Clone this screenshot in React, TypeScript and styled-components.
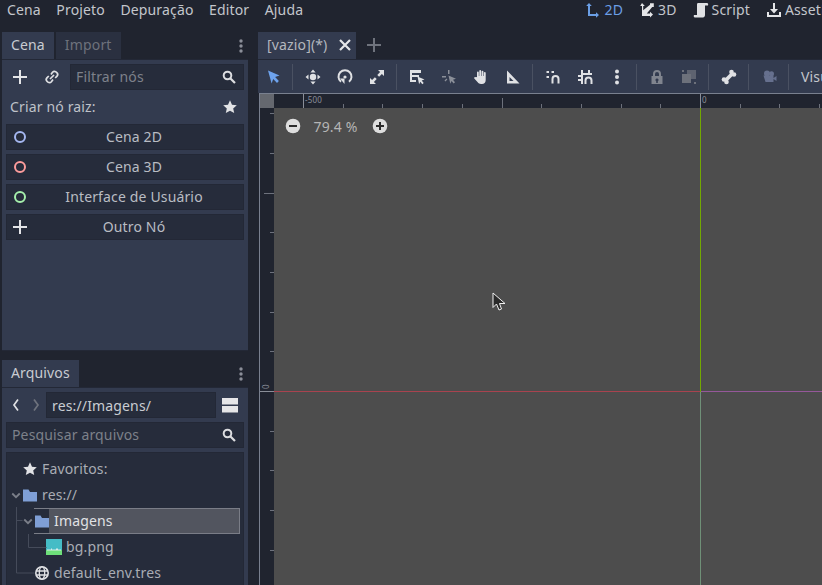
import React from 'react';
import { styled, createGlobalStyle } from 'styled-components';

const GlobalStyle = createGlobalStyle`
  html, body { margin: 0; padding: 0; background: #20242f; }
  body {
    font-family: "Noto Sans", "Liberation Sans", sans-serif;
    font-size: 14px;
    letter-spacing: 0.15px;
    color: #c9ccd2;
  }
`;

const Root = styled.div`
  width: 822px;
  height: 585px;
  overflow: hidden;
  background: #20242f;
  display: flex;
  flex-direction: column;
`;

const MenuBar = styled.div`
  height: 32px;
  flex: none;
  display: flex;
  justify-content: space-between;
  padding-left: 7px;
`;

const MenuGroup = styled.div<{ $gap: number; $overflow?: number }>`
  display: flex;
  gap: ${(p) => p.$gap}px;
  height: 20px;
  align-items: center;
  line-height: 20px;
  white-space: nowrap;
  margin-right: ${(p) => -(p.$overflow ?? 0)}px;
`;

const MenuItem = styled.span<{ $active?: boolean }>`
  display: inline-flex;
  align-items: center;
  gap: 3px;
  color: ${(p) => (p.$active ? '#6b9fe6' : '#c3c6cc')};
`;

const Main = styled.div`
  flex: 1;
  display: flex;
  min-height: 0;
`;

const LeftColumn = styled.div`
  width: 246px;
  margin-left: 2px;
  flex: none;
  display: flex;
  flex-direction: column;
`;

const TabBar = styled.div`
  height: 27px;
  flex: none;
  display: flex;
  gap: 2px;
  position: relative;
`;

const Tab = styled.div<{ $dim?: boolean }>`
  padding: 0 9px;
  line-height: 26px;
  background: ${(p) => (p.$dim ? '#2a3040' : '#333b4f')};
  color: ${(p) => (p.$dim ? '#6e727c' : '#c9ccd2')};
`;

const KebabSlot = styled.div`
  margin-left: auto;
  width: 16px;
  display: flex;
  align-items: center;
  margin-right: -1px;
`;

const ScenePanel = styled.div`
  height: 292px;
  flex: none;
  background: #333b4f;
  border-top: 1px solid #232836;
  border-bottom: 1px solid #232836;
  box-sizing: border-box;
  padding: 4px 4px 0;
  margin-bottom: 9px;
`;

const FilePanel = styled.div`
  flex: 1;
  background: #333b4f;
  border-top: 1px solid #232836;
  padding: 4px 4px 0;
  min-height: 0;
`;

const Row = styled.div<{ $mb?: number }>`
  display: flex;
  align-items: center;
  height: 26px;
  margin-bottom: ${(p) => p.$mb ?? 4}px;
`;

const IconSlot = styled.div<{ $w: number }>`
  width: ${(p) => p.$w}px;
  flex: none;
  display: flex;
  align-items: center;
  justify-content: center;
`;

const Field = styled.div`
  flex: 1;
  height: 26px;
  box-sizing: border-box;
  background: #262c3b;
  border: 1px solid #232836;
  display: flex;
  align-items: center;
  justify-content: space-between;
  padding: 0 6px 0 5px;
  color: #c9ccd2;
`;

const Placeholder = styled.span`
  color: #7d818a;
  margin-bottom: 2px;
`;

const RootLabel = styled.div`
  display: flex;
  align-items: center;
  justify-content: space-between;
  height: 33px;
  padding: 0 6px 0 4px;
  margin-bottom: 1px;
  color: #bfc2c9;
`;

const NodeButton = styled.div`
  height: 26px;
  box-sizing: border-box;
  margin-bottom: 4px;
  padding-left: 18px;
  background: #262c3b;
  border: 1px solid #232836;
  position: relative;
  line-height: 24px;
  text-align: center;
  color: #b9bcc3;
`;

const NodeIcon = styled.span`
  position: absolute;
  left: 5px;
  top: 4px;
  display: flex;
`;

const Tree = styled.div`
  background: #262c3b;
  border: 1px solid #232836;
  height: 140px;
  position: relative;
  padding-top: 3px;
  color: #a9acb4;
`;

const TreeRow = styled.div<{ $indent: number }>`
  height: 26px;
  box-sizing: border-box;
  display: flex;
  align-items: center;
  gap: 4px;
  margin-left: ${(p) => p.$indent}px;
`;

const TreeLabel = styled.span`
  margin-bottom: 2px;
`;

const ArrowSlot = styled.span`
  display: flex;
  width: 12px;
  flex: none;
  margin-right: -4px;
`;

const SelectedRow = styled.div`
  flex: 1;
  height: 26px;
  box-sizing: border-box;
  margin-right: 3px;
  display: flex;
  align-items: center;
  gap: 5px;
  background: #52555f;
  border: 1px solid #7a7d87;
  color: #e0e1e4;
`;

const SelectedIcon = styled.span`
  background: #262c3b;
  display: flex;
  align-self: stretch;
  align-items: center;
  width: 15px;
  margin-left: -1px;
`;

const TreeLines = styled.svg`
  position: absolute;
  left: 0;
  top: 0;
  pointer-events: none;
`;

const Editor = styled.div`
  flex: 1;
  margin-left: 10px;
  min-width: 0;
  display: flex;
  flex-direction: column;
`;

const EditorTabs = styled.div`
  height: 27px;
  flex: none;
  display: flex;
  align-items: stretch;
`;

const EditorTab = styled.div`
  width: 98px;
  box-sizing: border-box;
  padding: 0 3px 2px 9px;
  background: #333b4f;
  display: flex;
  align-items: center;
  justify-content: space-between;
  color: #b4b7be;
`;

const AddTab = styled.div`
  width: 36px;
  padding-bottom: 2px;
  display: flex;
  align-items: center;
  justify-content: center;
`;

const Toolbar = styled.div`
  height: 33px;
  flex: none;
  display: flex;
  align-items: center;
  background: #333b4f;
  border-top: 1px solid #232836;
  overflow: hidden;
`;

const ToolButton = styled.div<{ $first?: boolean }>`
  width: ${(p) => (p.$first ? 31 : 32)}px;
  flex: none;
  display: flex;
  justify-content: center;
`;

const ToolSep = styled.div`
  width: 1px;
  height: 26px;
  flex: none;
  background: #4a5162;
  margin: 0 4px 0 3px;
`;

const ToolText = styled.span`
  margin-left: 8px;
  color: #c3c6cc;
  white-space: nowrap;
`;

const CanvasFrame = styled.div`
  flex: 1;
  margin-left: 1px;
  border-top: 1px solid #79808f;
  border-left: 1px solid #79808f;
  display: grid;
  grid-template-columns: 14px 1fr;
  grid-template-rows: 14px 1fr;
  min-height: 0;
`;

const RulerCorner = styled.div`
  background: #65686f;
`;

const Ruler = styled.svg`
  display: block;
  background: #20242f;
`;

const Viewport = styled.div`
  background: #4d4d4d;
  position: relative;
  overflow: hidden;
`;

// origin of the canvas sits at (426, 283) inside the viewport
const AxisX = styled.div<{ $positive?: boolean }>`
  position: absolute;
  top: 283px;
  height: 1px;
  ${(p) => (p.$positive ? 'left: 427px; right: 0;' : 'left: 0; width: 426px;')}
  background: ${(p) => (p.$positive ? '#95589a' : '#a8434f')};
`;

const AxisY = styled.div<{ $positive?: boolean }>`
  position: absolute;
  left: 426px;
  width: 1px;
  ${(p) => (p.$positive ? 'top: 284px; bottom: 0;' : 'top: 0; height: 284px;')}
  background: ${(p) => (p.$positive ? '#6f9078' : '#72a800')};
`;

const ZoomControls = styled.div`
  position: absolute;
  left: 11px;
  top: 10px;
  display: flex;
  align-items: center;
  height: 16px;
  color: #b5b5b5;
`;

const ZoomValue = styled.span`
  width: 69px;
  padding-right: 2px;
  text-align: center;
`;

const CursorMark = styled.svg`
  position: absolute;
  left: 218px;
  top: 184px;
`;

const Ic = ({ children, size = 16 }: { children: React.ReactNode; size?: number }) => (
  <svg width={size} height={size} viewBox="0 0 16 16" fill="none" style={{ display: 'block', flex: 'none' }}>
    {children}
  </svg>
);

const Plus = ({ color = '#e4e5e8' }: { color?: string }) => (
  <Ic>
    <path d="M7 1h2v6h6v2H9v6H7V9H1V7h6z" fill={color} />
  </Ic>
);
const LinkIcon = () => (
  <Ic>
    <path d="M7 5.500l1.500-2.200c.9-1 2.300-1.200 3.400-.4l.9.7c1 .9 1.100 2.400.2 3.500L11.200 9M9 10.500l-1.600 2.200c-.9 1-2.300 1.200-3.400.4l-.9-.7c-1-.9-1.100-2.400-.2-3.500L4.800 7M6 10l4-4" stroke="#dfe0e3" strokeWidth="1.700" />
  </Ic>
);
const Search = () => (
  <Ic>
    <circle cx="6.500" cy="6.500" r="3.800" stroke="#dcdde0" strokeWidth="2" />
    <path d="M9.500 9.500l4.500 4.500" stroke="#dcdde0" strokeWidth="2.200" />
  </Ic>
);
const Star = () => (
  <Ic>
    <path d="M8 1.300l2 4.400 4.800.5-3.600 3.200 1 4.700L8 11.700l-4.200 2.400 1-4.700L1.200 6.200 6 5.700z" fill="#e2e3e6" />
  </Ic>
);
const Kebab = () => (
  <Ic>
    <circle cx="8" cy="3" r="1.700" fill="#8b8f99" />
    <circle cx="8" cy="8" r="1.700" fill="#8b8f99" />
    <circle cx="8" cy="13" r="1.700" fill="#8b8f99" />
  </Ic>
);
const Ring = ({ color }: { color: string }) => (
  <Ic>
    <circle cx="8" cy="8" r="5" stroke={color} strokeWidth="2" />
  </Ic>
);
const Chevron = ({ dir, color }: { dir: 'l' | 'r'; color: string }) => (
  <Ic>
    <path d={dir === 'l' ? 'M10 2.500L6 8l4 5.500' : 'M6 2.500L10 8l-4 5.500'} stroke={color} strokeWidth="1.700" />
  </Ic>
);
const SplitView = () => (
  <Ic>
    <path d="M0 1h16v6.500H0zM0 9h16v6.500H0z" fill="#e6e6e8" />
  </Ic>
);
const Folder = () => (
  <Ic>
    <path d="M1 2.500h5.500L8 5h7v9.500H1z" fill="#7f9fd6" />
  </Ic>
);
const Arrow = () => (
  <ArrowSlot>
    <Ic size={12}>
      <path d="M3 6l5 5 5-5" stroke="#7b7f89" strokeWidth="2.400" />
    </Ic>
  </ArrowSlot>
);
const ImageThumb = () => (
  <Ic>
    <path d="M0 0h16v11H0z" fill="#45bcc6" />
    <path d="M0 11h16v5H0z" fill="#6ee07a" />
    <path d="M1 10.500h4v-1h1v1h4v-1h2v1h3v1H1z" fill="#d8ece8" />
  </Ic>
);
const Globe = () => (
  <Ic>
    <circle cx="8" cy="8" r="6.200" stroke="#e0e1e4" strokeWidth="1.600" />
    <ellipse cx="8" cy="8" rx="2.700" ry="6.200" stroke="#e0e1e4" strokeWidth="1.300" />
    <path d="M2 6h12M2 10h12" stroke="#e0e1e4" strokeWidth="1.300" />
  </Ic>
);
const Close = () => (
  <Ic>
    <path d="M3 3l10 10M13 3L3 13" stroke="#e6e7ea" strokeWidth="2.200" />
  </Ic>
);

const SelectTool = () => (
  <Ic>
    <path d="M2 1.500l11.500 5-4.400 1.600 3.800 4-1.900 1.900-3.800-4-1.600 4.500z" fill="#6ea3ee" />
  </Ic>
);
const MoveTool = () => (
  <Ic>
    <path d="M8 .5l2.600 3H5.400zM8 15.500l-2.600-3h5.200zM.5 8l3-2.600v5.200zM15.500 8l-3 2.600V5.400z" fill="#e0e1e4" />
    <circle cx="8" cy="8" r="3.200" fill="#e0e1e4" />
  </Ic>
);
const RotateTool = () => (
  <Ic>
    <path d="M4 12.800A6.500 6.500 0 1 1 12 12.800" stroke="#e0e1e4" strokeWidth="2" />
    <path d="M3 9.500h4.500v5.500z" fill="#e0e1e4" />
    <circle cx="8" cy="8" r="1.600" fill="#e0e1e4" />
  </Ic>
);
const ScaleTool = () => (
  <Ic>
    <path d="M9 1h6v6l-2.100-2.100-2.800 2.800L8.300 5.900l2.800-2.800zM1 9l2.100 2.100 2.800-2.800 1.800 1.800-2.800 2.800L7 15H1z" fill="#e0e1e4" />
  </Ic>
);
const ListSelectTool = () => (
  <Ic>
    <path d="M1 1h11v3H3v2h7v2H3v3h4v2H1z" fill="#e0e1e4" />
    <path d="M8.500 7.500l7 3-2.800 1 2 2.500-1.400 1.200-2-2.500-1.200 2.500z" fill="#e0e1e4" />
  </Ic>
);
const PivotTool = () => (
  <Ic>
    <path d="M7 1h1.500v4H7zM1 7h4v1.500H1zM3.500 11.500l2-2 .9.9-2 2z" fill="#8b8f99" />
    <path d="M7.500 6.500l7.500 3.200-3 1 2 2.600-1.400 1.200-2-2.600-1.300 2.800z" fill="#8b8f99" />
  </Ic>
);
const HandTool = () => (
  <Ic>
    <path d="M4 8V3.500a.9.9 0 0 1 1.800 0V7h.5V2a.9.9 0 0 1 1.800 0v5h.5V2.700a.9.9 0 0 1 1.800 0V7h.5V4a.9.9 0 0 1 1.800 0v7c0 2.500-1.500 4-3.700 4H8c-1.600 0-2.500-.6-3.300-1.700L1.300 9.500c-.6-.9.500-2 1.400-1.300z" fill="#e0e1e4" />
  </Ic>
);
const RulerTool = () => (
  <Ic>
    <path fillRule="evenodd" d="M2 1.500l12.500 13H2zM4.500 8v4h4z" fill="#e0e1e4" />
  </Ic>
);
const SmartSnap = () => (
  <Ic>
    <path d="M1.500 2h2.500v2H1.500zM6.500 2H9v2H6.500zM1.500 7h2.500v2H1.500z" fill="#e0e1e4" />
    <path d="M7.500 14.500V10a3 3 0 0 1 6 0v4.500" stroke="#e0e1e4" strokeWidth="2" />
  </Ic>
);
const GridSnap = () => (
  <Ic>
    <path d="M4 1h2v3h5V1h2v3h2v2H6v2H1V6h3V1zM1 10h5v2H1zM4 8h2v7H4z" fill="#e0e1e4" />
    <path d="M8.500 15v-3.500a3 3 0 0 1 6 0V15" stroke="#e0e1e4" strokeWidth="2" />
  </Ic>
);
const KebabLight = () => (
  <Ic>
    <circle cx="8" cy="2.500" r="2" fill="#e0e1e4" />
    <circle cx="8" cy="8" r="2" fill="#e0e1e4" />
    <circle cx="8" cy="13.500" r="2" fill="#e0e1e4" />
  </Ic>
);
const LockIcon = () => (
  <Ic>
    <path fillRule="evenodd" d="M4 7V5a4 4 0 0 1 8 0v2h1.500v8h-11V7zm2 0h4V5a2 2 0 0 0-4 0zm2 2.500a1.500 1.500 0 0 0-.8 2.800V14h1.600v-1.700A1.500 1.500 0 0 0 8 9.500z" fill="#80848e" />
  </Ic>
);
const GroupIcon = () => (
  <Ic>
    <path d="M1 5h9v9H1z" fill="#6d717b" />
    <path d="M6 1h9v9H6z" fill="#6d717b" opacity=".75" />
    <path d="M1 1h2v2H1zM13 13h2v2h-2z" fill="#6d717b" />
  </Ic>
);
const BoneIcon = () => (
  <Ic>
    <path d="M4.500 11.500l7-7" stroke="#e0e1e4" strokeWidth="3.800" />
    <circle cx="3" cy="10.500" r="2.300" fill="#e0e1e4" />
    <circle cx="5.500" cy="13" r="2.300" fill="#e0e1e4" />
    <circle cx="10.500" cy="3" r="2.300" fill="#e0e1e4" />
    <circle cx="13" cy="5.500" r="2.300" fill="#e0e1e4" />
  </Ic>
);
const CameraIcon = () => (
  <Ic>
    <circle cx="6" cy="4.500" r="3" fill="#66708e" />
    <circle cx="10.500" cy="4.800" r="2.500" fill="#66708e" />
    <path d="M2.500 6.500h10v6.500h-8zM12.500 9l3-2v5l-3-2z" fill="#66708e" />
  </Ic>
);
const Icon2D = () => (
  <Ic>
    <path d="M4 1l2.800 3H5v8h6v-1.800l3 2.800-3 2.800V14H3V4H1.200z" fill="#6b9fe6" />
  </Ic>
);
const Icon3D = () => (
  <Ic>
    <path d="M3 1l2.800 3H4.200v4.200L11 2.800V1.200h3.800V5h-1.600L7.800 11.400H11V9.800l3 2.800-3 2.800V14H3V4H1.200z" fill="#e4e5e8" />
  </Ic>
);
const IconScript = () => (
  <Ic>
    <path d="M5 1h9c1 0 1.500 1 1 2.500h-3V13c0 1.500-1 2.500-2 2.500H2c-1.300 0-1.500-1.500-1-2.500h3V3c0-1 0-2 1-2z" fill="#e0e1e4" />
  </Ic>
);
const IconAsset = () => (
  <Ic>
    <path d="M7 1h2v6h3l-4 4.500L4 7h3zM1 10h2v3h10v-3h2v5H1z" fill="#e4e5e8" />
  </Ic>
);
const CircleBtn = ({ plus }: { plus?: boolean }) => (
  <Ic>
    <circle cx="8" cy="8" r="7.300" fill="#dedede" />
    <path d={plus ? 'M7 4h2v3h3v2H9v3H7V9H4V7h3z' : 'M4 7h8v2H4z'} fill="#2c2c2c" />
  </Ic>
);

const menuLeft = ['Cena', 'Projeto', 'Depuração', 'Editor', 'Ajuda'];

const tools: (React.ReactNode | 'sep')[] = [
  <SelectTool />, 'sep',
  <MoveTool />, <RotateTool />, <ScaleTool />, 'sep',
  <ListSelectTool />, <PivotTool />, <HandTool />, <RulerTool />, 'sep',
  <SmartSnap />, <GridSnap />, <KebabLight />, 'sep',
  <LockIcon />, <GroupIcon />, 'sep',
  <BoneIcon />, 'sep',
  <CameraIcon />, 'sep',
];

const STEP = 39.7;
const ORIGIN_X = 700 - 274;
const ORIGIN_Y = 391 - 108;

const HorizontalRuler = () => {
  const ticks = [];
  for (let i = -11; i <= 4; i++) {
    const x = Math.round(ORIGIN_X + i * STEP) + 0.5;
    const big = i % 10 === 0;
    const mid = i % 5 === 0;
    ticks.push(<line key={i} x1={x} x2={x} y1={big ? 0 : mid ? 4 : 10} y2={14} stroke={big ? '#8a8e98' : '#6d717c'} />);
  }
  return (
    <Ruler width={548} height={14}>
      {ticks}
      <text x={31} y={9} fontSize="8" fill="#8a8e98" fontFamily="Noto Sans">-500</text>
      <text x={428} y={9} fontSize="8" fill="#8a8e98" fontFamily="Noto Sans">0</text>
    </Ruler>
  );
};

const VerticalRuler = () => {
  const ticks = [];
  for (let i = -7; i <= 5; i++) {
    const y = Math.round(ORIGIN_Y + i * STEP) + 0.5;
    const big = i % 10 === 0;
    const mid = i % 5 === 0;
    ticks.push(<line key={i} y1={y} y2={y} x1={big ? 0 : mid ? 4 : 10} x2={14} stroke={big ? '#8a8e98' : '#6d717c'} />);
  }
  return (
    <Ruler width={14} height={477}>
      {ticks}
      <text transform="translate(9 281) rotate(-90)" fontSize="8" fill="#8a8e98" fontFamily="Noto Sans">0</text>
    </Ruler>
  );
};

const App = () => (
  <Root>
    <GlobalStyle />
    <MenuBar>
      <MenuGroup $gap={15.5}>
        {menuLeft.map((m) => (
          <MenuItem key={m}>{m}</MenuItem>
        ))}
      </MenuGroup>
      <MenuGroup $gap={16} $overflow={19}>
        <MenuItem $active><Icon2D />2D</MenuItem>
        <MenuItem><Icon3D />3D</MenuItem>
        <MenuItem><IconScript />Script</MenuItem>
        <MenuItem><IconAsset />AssetLib</MenuItem>
      </MenuGroup>
    </MenuBar>
    <Main>
      <LeftColumn>
        <TabBar>
          <Tab>Cena</Tab>
          <Tab $dim>Import</Tab>
          <KebabSlot><Kebab /></KebabSlot>
        </TabBar>
        <ScenePanel>
          <Row $mb={0}>
            <IconSlot $w={28}><Plus /></IconSlot>
            <IconSlot $w={36}><LinkIcon /></IconSlot>
            <Field>
              <Placeholder>Filtrar nós</Placeholder>
              <Search />
            </Field>
          </Row>
          <RootLabel>
            Criar nó raiz:
            <Star />
          </RootLabel>
          <NodeButton><NodeIcon><Ring color="#a5b7f0" /></NodeIcon>Cena 2D</NodeButton>
          <NodeButton><NodeIcon><Ring color="#fc9c9c" /></NodeIcon>Cena 3D</NodeButton>
          <NodeButton><NodeIcon><Ring color="#a5efac" /></NodeIcon>Interface de Usuário</NodeButton>
          <NodeButton><NodeIcon><Plus /></NodeIcon>Outro Nó</NodeButton>
        </ScenePanel>
        <TabBar>
          <Tab>Arquivos</Tab>
          <KebabSlot><Kebab /></KebabSlot>
        </TabBar>
        <FilePanel>
          <Row>
            <IconSlot $w={20}><Chevron dir="l" color="#e0e1e4" /></IconSlot>
            <IconSlot $w={20}><Chevron dir="r" color="#6f737d" /></IconSlot>
            <Field>res://Imagens/</Field>
            <IconSlot $w={28}><SplitView /></IconSlot>
          </Row>
          <Row>
            <Field>
              <Placeholder>Pesquisar arquivos</Placeholder>
              <Search />
            </Field>
          </Row>
          <Tree>
            <TreeLines width={236} height={132}>
              <path d="M9.500 54v66h18M9.500 67.500h6M21.500 81v13.500h18" stroke="#454b5a" fill="none" />
            </TreeLines>
            <TreeRow $indent={15}><Star /><TreeLabel>Favoritos:</TreeLabel></TreeRow>
            <TreeRow $indent={3}>
              <Arrow />
              <Folder />
              <TreeLabel>res://</TreeLabel>
            </TreeRow>
            <TreeRow $indent={15}>
              <Arrow />
              <SelectedRow>
                <SelectedIcon><Folder /></SelectedIcon>
                <TreeLabel>Imagens</TreeLabel>
              </SelectedRow>
            </TreeRow>
            <TreeRow $indent={39}><ImageThumb /><TreeLabel>bg.png</TreeLabel></TreeRow>
            <TreeRow $indent={27}><Globe /><TreeLabel>default_env.tres</TreeLabel></TreeRow>
          </Tree>
        </FilePanel>
      </LeftColumn>
      <Editor>
        <EditorTabs>
          <EditorTab>
            [vazio](*)
            <Close />
          </EditorTab>
          <AddTab><Plus color="#6f737d" /></AddTab>
        </EditorTabs>
        <Toolbar>
          {tools.map((t, i) =>
            t === 'sep' ? <ToolSep key={i} /> : <ToolButton key={i} $first={i === 0}>{t}</ToolButton>
          )}
          <ToolText>Visualizar</ToolText>
        </Toolbar>
        <CanvasFrame>
          <RulerCorner />
          <HorizontalRuler />
          <VerticalRuler />
          <Viewport>
            <AxisX />
            <AxisX $positive />
            <AxisY />
            <AxisY $positive />
            <ZoomControls>
              <CircleBtn />
              <ZoomValue>79.4 %</ZoomValue>
              <CircleBtn plus />
            </ZoomControls>
            <CursorMark width={14} height={20} viewBox="0 0 14 20">
              <path d="M1 1v14.500l3.500-3.500 2.500 6 2.500-1-2-5.500H13z" fill="#2a2a2a" stroke="#f0f0f0" strokeWidth="1" />
            </CursorMark>
          </Viewport>
        </CanvasFrame>
      </Editor>
    </Main>
  </Root>
);

export default App;
